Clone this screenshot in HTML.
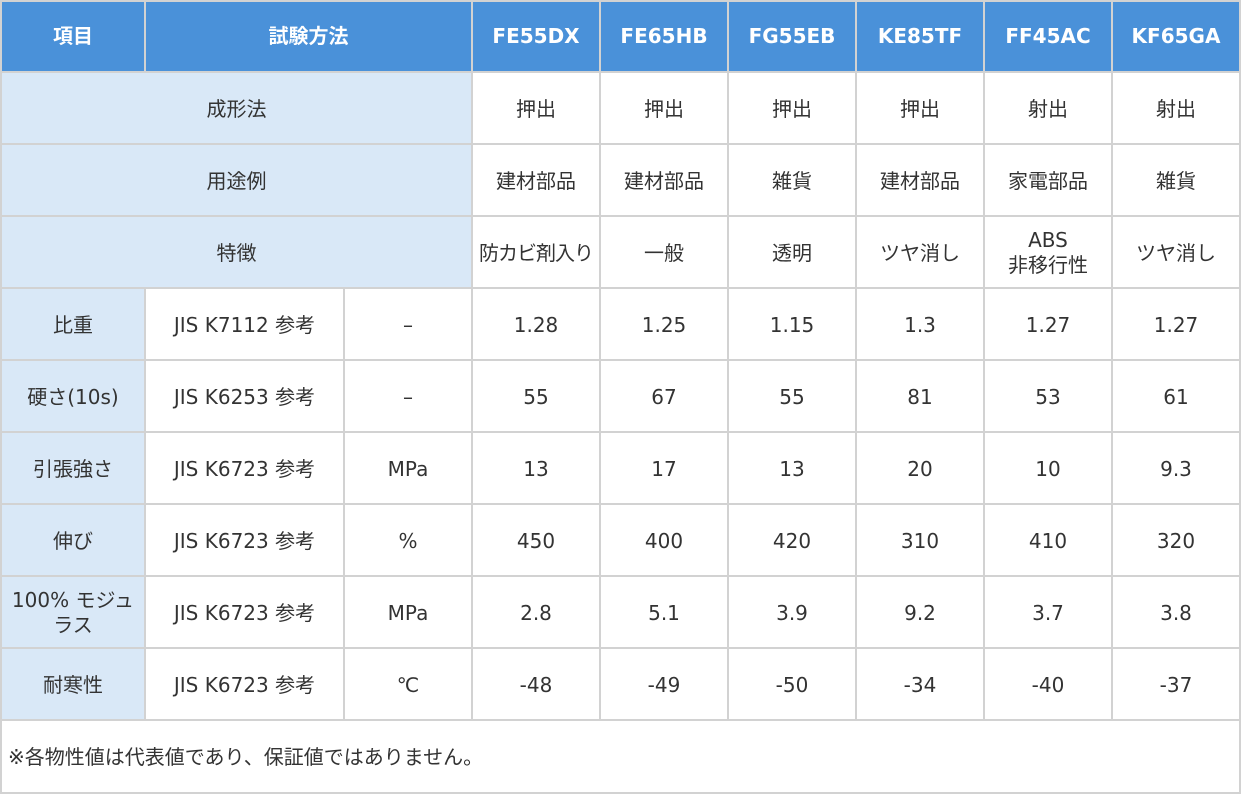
<!DOCTYPE html>
<html><head><meta charset="utf-8"><style>
body{margin:0;width:1242px;height:794px;background:#fff;overflow:hidden}
#w{width:1241px;height:794px;box-sizing:border-box;padding:2px;background:#d2d2d2;display:grid;grid-template-columns:142px 197px 126px repeat(6,126px);grid-template-rows:69px repeat(9,70px) 71px;gap:2px;font-family:"DejaVu Sans","Noto Sans CJK JP",sans-serif;color:#333;font-size:20px}
#w>div{display:flex;align-items:center;justify-content:center;text-align:center;background:#fff;line-height:1.25;padding-top:2px;box-sizing:border-box}
#w>.h{background:#4a91d9;color:#fff;font-weight:bold;font-size:20px;padding-top:0}
#w>.l{background:#d9e8f7}
.s2{grid-column:span 2}.s3{grid-column:span 3}
#w>.f{grid-column:1/-1;justify-content:flex-start;padding-left:6px}
</style></head><body><div id="w">
<div class="h">項目</div><div class="h s2">試験方法</div><div class="h">FE55DX</div><div class="h">FE65HB</div><div class="h">FG55EB</div><div class="h">KE85TF</div><div class="h">FF45AC</div><div class="h">KF65GA</div>
<div class="l s3">成形法</div><div>押出</div><div>押出</div><div>押出</div><div>押出</div><div>射出</div><div>射出</div>
<div class="l s3">用途例</div><div>建材部品</div><div>建材部品</div><div>雑貨</div><div>建材部品</div><div>家電部品</div><div>雑貨</div>
<div class="l s3">特徴</div><div style="letter-spacing:-1px">防カビ剤入り</div><div>一般</div><div>透明</div><div>ツヤ消し</div><div>ABS<br>非移行性</div><div>ツヤ消し</div>
<div class="l">比重</div><div>JIS K7112 参考</div><div>–</div><div>1.28</div><div>1.25</div><div>1.15</div><div>1.3</div><div>1.27</div><div>1.27</div>
<div class="l">硬さ(10s)</div><div>JIS K6253 参考</div><div>–</div><div>55</div><div>67</div><div>55</div><div>81</div><div>53</div><div>61</div>
<div class="l">引張強さ</div><div>JIS K6723 参考</div><div>MPa</div><div>13</div><div>17</div><div>13</div><div>20</div><div>10</div><div>9.3</div>
<div class="l">伸び</div><div>JIS K6723 参考</div><div>%</div><div>450</div><div>400</div><div>420</div><div>310</div><div>410</div><div>320</div>
<div class="l">100% モジュ<br>ラス</div><div>JIS K6723 参考</div><div>MPa</div><div>2.8</div><div>5.1</div><div>3.9</div><div>9.2</div><div>3.7</div><div>3.8</div>
<div class="l">耐寒性</div><div>JIS K6723 参考</div><div>℃</div><div>-48</div><div>-49</div><div>-50</div><div>-34</div><div>-40</div><div>-37</div>
<div class="f">※各物性値は代表値であり、保証値ではありません。</div>
</div></body></html>
